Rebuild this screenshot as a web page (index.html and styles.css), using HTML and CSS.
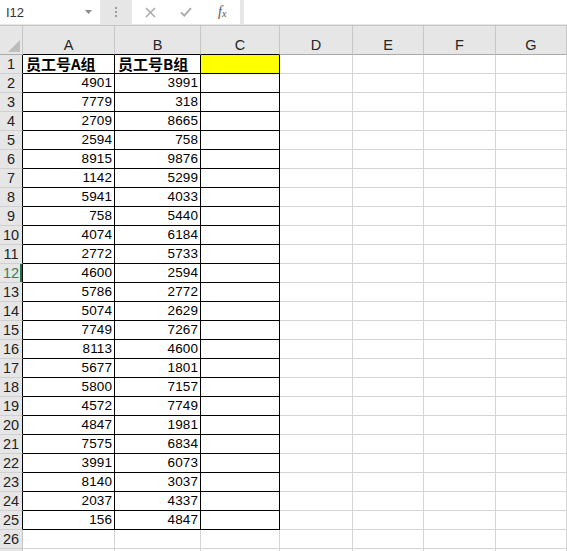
FILE: index.html
```html
<!DOCTYPE html>
<html lang="zh-CN">
<head>
    <meta charset="UTF-8">
    <meta name="viewport" content="width=device-width, initial-scale=1.0">
    <title>员工号</title>
    <link rel="stylesheet" href="styles.css">
</head>
<body>
    <div class="formula-bar">
        <div class="name-box">
            <span>I12</span>
            <svg class="caret" width="7" height="4" viewBox="0 0 7 4"><path d="M0 0H7L3.5 4Z" fill="#8a8a8a"/></svg>
        </div>
        <div class="grip"><i></i><i></i><i></i></div>
        <div class="fx-buttons">
            <svg class="btn-icon" width="11" height="11" viewBox="0 0 11 11"><path d="M1 1L10 10M10 1L1 10" stroke="#a9a9a9" stroke-width="1.5" fill="none"/></svg>
            <svg class="btn-icon" width="12" height="10" viewBox="0 0 12 10"><path d="M1 5.5L4.3 8.6L11 1.2" stroke="#a9a9a9" stroke-width="1.8" fill="none"/></svg>
            <span class="fx">f<sub>x</sub></span>
        </div>
        <div class="formula-input"></div>
    </div>

    <div class="sheet" id="sheet">
        <div class="cell hd corner">
            <svg width="12" height="12" viewBox="0 0 12 12"><path d="M12 0V12H0Z" fill="#bdbdbd"/></svg>
        </div>
        <div class="cell hd in">A</div>
        <div class="cell hd in">B</div>
        <div class="cell hd in">C</div>
        <div class="cell hd">D</div>
        <div class="cell hd">E</div>
        <div class="cell hd">F</div>
        <div class="cell hd">G</div>

        <div class="cell rh in">1</div>
        <div class="cell box title">员工号A组</div>
        <div class="cell box title">员工号B组</div>
        <div class="cell box yellow"></div>
        <div class="cell"></div>
        <div class="cell"></div>
        <div class="cell"></div>
        <div class="cell"></div>
    </div>

    <script>
        const groupA = [4901, 7779, 2709, 2594, 8915, 1142, 5941, 758, 4074, 2772, 4600, 5786,
            5074, 7749, 8113, 5677, 5800, 4572, 4847, 7575, 3991, 8140, 2037, 156];
        const groupB = [3991, 318, 8665, 758, 9876, 5299, 4033, 5440, 6184, 5733, 2594, 2772,
            2629, 7267, 4600, 1801, 7157, 7749, 1981, 6834, 6073, 3037, 4337, 4847];
        const sheet = document.getElementById('sheet');

        function addCell(cls, text) {
            const div = document.createElement('div');
            div.className = 'cell ' + cls;
            div.textContent = text;
            sheet.appendChild(div);
        }

        // rows 2..25 hold the data, 26 is empty, 27 only peeks in at the bottom edge
        for (let r = 2; r <= 27; r++) {
            const inTable = r <= 25;
            let rh = 'rh' + (inTable ? ' in' : '');
            if (r === 12) rh += ' active';
            addCell(rh, r < 27 ? r : '');
            if (inTable) {
                addCell('box num', groupA[r - 2]);
                addCell('box num', groupB[r - 2]);
                addCell('box', '');
            } else {
                addCell('', '');
                addCell('', '');
                addCell('', '');
            }
            for (let c = 0; c < 4; c++) addCell('', '');
        }
    </script>
</body>
</html>
```

FILE: styles.css
```css
body {
    margin: 0;
    width: 567px;
    height: 551px;
    overflow: hidden;
    background: #fff;
    font-family: "Liberation Sans", Arial, sans-serif;
}

/* formula bar */
.formula-bar {
    display: flex;
    align-items: flex-start;
    height: 25px;
    background: #e6e6e6;
}
.name-box {
    width: 100px;
    height: 24px;
    box-sizing: border-box;
    padding: 0 8px 0 6px;
    background: #fff;
    display: flex;
    align-items: center;
    justify-content: space-between;
    font-size: 13px;
    color: #333;
}
.grip {
    width: 32px;
    display: flex;
    flex-direction: column;
    align-items: center;
    gap: 2px;
    padding-top: 7px;
}
.grip i {
    width: 2px;
    height: 2px;
    background: #9c9c9c;
}
.fx-buttons {
    width: 108px;
    height: 24px;
    margin-right: 4px;
    background: #fff;
    display: flex;
    align-items: center;
    padding-left: 13px;
    box-sizing: border-box;
    gap: 24px;
}
.fx {
    font-family: "Liberation Serif", serif;
    font-style: italic;
    font-size: 14px;
    color: #555;
    margin-left: 2px;
}
.fx sub {
    font-size: 10px;
    vertical-align: -1px;
}
.formula-input {
    flex: 1;
    height: 24px;
    background: #fff;
}

/* sheet grid */
.sheet {
    display: grid;
    grid-template-columns: 23px 92px 86px 79px 73px 71px 72px 1fr;
    grid-template-rows: 29px;
    grid-auto-rows: 19px;
    border-top: 1px solid #c6c6c6;
}
.cell {
    box-sizing: border-box;
    border-right: 1px solid #d4d4d4;
    border-bottom: 1px solid #d4d4d4;
    padding: 0 2px;
    font-size: 13.5px;
    line-height: 18px;
    letter-spacing: 0.1px;
    color: #000;
    white-space: nowrap;
    overflow: hidden;
}
.hd {
    background: #e6e6e6;
    border-right-color: #c6c6c6;
    border-bottom-color: #ababab;
    text-align: center;
    font-size: 14.5px;
    line-height: 16px;
    padding-top: 11px;
    color: #262626;
    letter-spacing: 0;
}
.hd.in {
    border-bottom-color: #000;
}
.corner {
    display: flex;
    justify-content: flex-end;
    align-items: flex-end;
    padding: 0 2px 2px 0;
}
.rh {
    background: #e6e6e6;
    border-right-color: #c6c6c6;
    border-bottom-color: #d0d0d0;
    text-align: center;
    padding: 0;
    font-size: 14.5px;
    letter-spacing: 0;
    color: #222;
}
.rh.in {
    border-right-color: #000;
}
.rh.active {
    color: #3d7b52;
    box-shadow: inset -2px 0 0 #217346;
}
.box {
    border-right-color: #000;
    border-bottom-color: #000;
}
.num {
    text-align: right;
}
.title {
    font-family: "Noto Sans CJK SC", sans-serif;
    font-weight: bold;
    font-size: 15px;
    line-height: 17px;
    letter-spacing: 0;
    padding-left: 3px;
    overflow: visible;
}
.yellow {
    background: #ffff00;
}
```
